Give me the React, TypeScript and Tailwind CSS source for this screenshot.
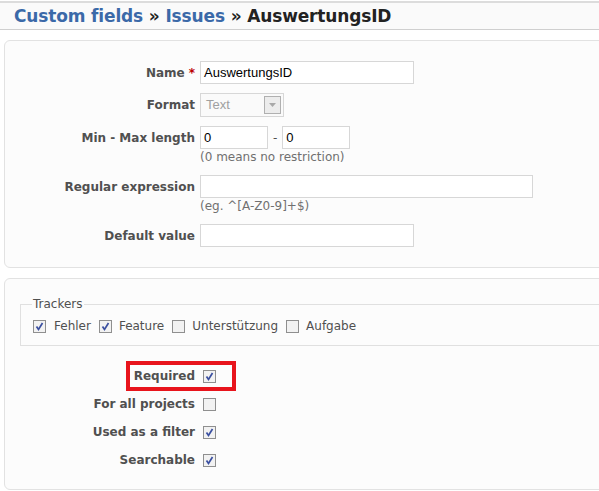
import React from 'react';

const font = { fontFamily: '"DejaVu Sans", Verdana, sans-serif' };

function Check({ checked = false }: { checked?: boolean }) {
  return (
    <span className="inline-block w-[13px] h-[13px] border border-[#8f8f8f] bg-[#f2f2f2] shrink-0 relative">
      {checked && (
        <svg viewBox="0 0 11 11" className="absolute inset-0 w-[11px] h-[11px]">
          <path d="M2.5 5.5 L4.5 8.5 L8.5 2" fill="none" stroke="#3a4fa0" strokeWidth="1.7" />
        </svg>
      )}
    </span>
  );
}

function Row({ label, children, req }: { label: string; children: React.ReactNode; req?: boolean }) {
  return (
    <div className="flex mb-[9px]">
      <div className="w-[195px] shrink-0 pr-[5px] h-[23px] flex items-center justify-end font-bold text-[12px] text-[#505050]">
        {label}
        {req && <span className="text-[#bb0000] ml-[4px]">*</span>}
      </div>
      <div>{children}</div>
    </div>
  );
}

const inputCls =
  "h-[23px] border border-[#d7d7d7] bg-white px-[3px] flex items-center text-[13px] text-black font-['Liberation_Sans',Arial,sans-serif]";

export default function App() {
  return (
    <div className="w-full h-[491px] overflow-hidden bg-white" style={font}>
      <div className="w-[640px]">
        <div className="mt-[1px] border-t-2 border-[#dcdcdc] border-b border-b-[#cfcfcf] h-[29px] bg-[#fafafa] pl-[14px] flex items-center">
          <h2 className="text-[17px] tracking-[-0.15px] font-bold text-[#222] leading-none">
            <span className="text-[#3b69a8]">Custom fields</span> » <span className="text-[#3b69a8]">Issues</span> » AuswertungsID
          </h2>
        </div>

        <div className="ml-[4px] mt-[10px] border border-[#e2e2e2] rounded-[6px] bg-[#fcfcfc] pt-[20px] pb-[11px]">
          <Row label="Name" req>
            <div className={inputCls + ' w-[214px]'}>AuswertungsID</div>
          </Row>
          <Row label="Format">
            <div className="h-[24px] w-[84px] border border-[#d7d7d7] bg-[#fafafa] flex items-center justify-between pl-[5px] pr-[2px] text-[13px] text-[#a0a0a0] font-['Liberation_Sans',Arial,sans-serif]">
              Text
              <span className="w-[17px] h-[18px] border border-[#b0b0b0] bg-[#ececec] flex items-center justify-center">
                <svg width="7" height="4" viewBox="0 0 7 4"><path d="M0 0 H7 L3.5 4 Z" fill="#a8a8a8" /></svg>
              </span>
            </div>
          </Row>
          <Row label="Min - Max length">
            <div className="flex items-center">
              <div className={inputCls + ' w-[68px]'}>0</div>
              <span className="mx-[5px] text-[12px] text-[#505050]">-</span>
              <div className={inputCls + ' w-[68px]'}>0</div>
            </div>
            <div className="text-[12px] text-[#707070] h-[17px] leading-[17px]">(0 means no restriction)</div>
          </Row>
          <Row label="Regular expression">
            <div className={inputCls + ' w-[333px]'}></div>
            <div className="text-[12px] text-[#707070] h-[17px] leading-[17px]">(eg. ^[A-Z0-9]+$)</div>
          </Row>
          <Row label="Default value">
            <div className={inputCls + ' w-[214px]'}></div>
          </Row>
        </div>

        <div className="ml-[4px] mt-[10px] border border-[#e2e2e2] rounded-[6px] bg-[#fcfcfc] pt-[16px] pb-[15px] relative">
          <fieldset className="ml-[15px] border border-[#e0e0e0] pl-[12px] pb-[10px]">
            <legend className="px-[1px] text-[12px] text-[#505050] -ml-[1px]">Trackers</legend>
            <div className="flex items-center text-[12px] text-[#505050] mt-[4px]">
              <Check checked />
              <span className="ml-[8px] mr-[8px]">Fehler</span>
              <Check checked />
              <span className="ml-[7px] mr-[8px]">Feature</span>
              <Check />
              <span className="ml-[7px] mr-[8px]">Unterstützung</span>
              <Check />
              <span className="ml-[7px]">Aufgabe</span>
            </div>
          </fieldset>

          <div className="mt-[16px] relative">
            {[
              ['Required', true],
              ['For all projects', false],
              ['Used as a filter', true],
              ['Searchable', true],
            ].map(([l, c]) => (
              <div key={l as string} className="flex items-center h-[28px]">
                <div className="w-[198px] text-right font-bold text-[12px] text-[#505050] pr-[8px]">{l as string}</div>
                <Check checked={c as boolean} />
              </div>
            ))}
            <div className="absolute left-[121px] top-[-1px] w-[110px] h-[30px] border-[4px] border-[#e8141c]" />
          </div>
        </div>
      </div>
    </div>
  );
}
